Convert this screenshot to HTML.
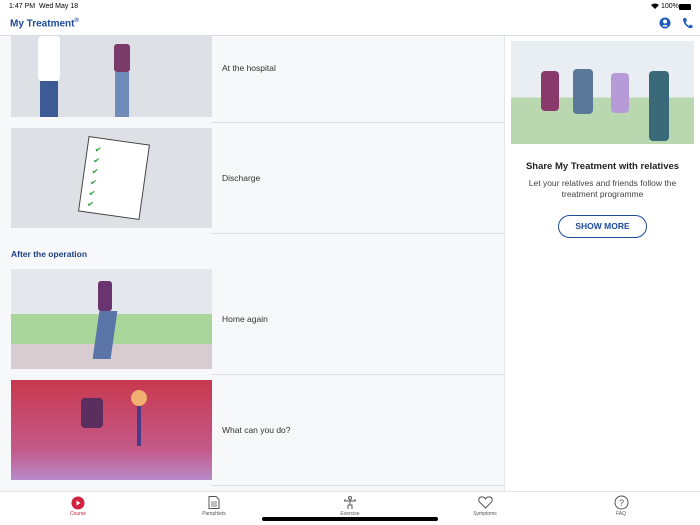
<!DOCTYPE html>
<html><head><meta charset="utf-8"><style>
*{margin:0;padding:0;box-sizing:border-box}
body{width:700px;height:525px;overflow:hidden;font-family:"Liberation Sans",sans-serif;background:#fff;position:relative}
.abs{position:absolute}
.sb{font-size:7px;color:#000;top:3px}
.list{left:0;top:36px;width:505px;height:455px;background:#f7f8fa;border-right:1px solid #e4e6ea;overflow:hidden}
.img{position:absolute;left:11px;width:201px;overflow:hidden}
.lbl{position:absolute;left:222px;font-size:8.5px;color:#333}
.div{position:absolute;left:211px;width:294px;height:1px;background:#dcdfe3}
.tab{position:absolute;top:511px;font-size:5px;color:#555;text-align:center;width:60px}
</style></head><body>
<div class="abs sb" style="left:9px">1:47 PM&nbsp;&nbsp;Wed May 18</div>
<div class="abs sb" style="left:661px">100%</div>
<svg class="abs" style="left:651px;top:3px" width="8" height="6" viewBox="0 0 8 6"><path d="M0 2Q4-1 8 2L4 6Z" fill="#000"/></svg>
<div class="abs" style="left:679px;top:4px;width:12px;height:6px;background:#000;border-radius:1px"></div>
<div class="abs" style="left:10px;top:18px;font-size:10px;font-weight:bold;color:#1e4a9c">My Treatment<sup style="font-size:6px">®</sup></div>
<svg class="abs" style="left:659px;top:17px" width="12" height="12" viewBox="0 0 12 12"><circle cx="6" cy="6" r="5.5" fill="#1e5bbd"/><circle cx="6" cy="4.5" r="2" fill="#fff"/><path d="M2.8 9.5Q6 6 9.2 9.5" fill="#fff"/></svg>
<svg class="abs" style="left:682px;top:17px" width="11" height="12" viewBox="0 0 11 12"><path d="M2 1L4 1 5 4 3.5 5Q5 8 7 9L8 7.5 10.5 8.5 10.5 10.5Q9 11.5 7 11 2 8 1 3Q1 1.5 2 1Z" fill="#1e5bbd"/></svg>
<div class="abs" style="left:0;top:35px;width:700px;height:1px;background:#d8dbe0"></div>
<div class="abs list">
 <div class="img" style="top:0;height:81px;background:#dde1e6">
  <div class="abs" style="left:27px;top:0;width:22px;height:45px;background:#fff;border-radius:4px"></div>
  <div class="abs" style="left:29px;top:45px;width:18px;height:36px;background:#3c5a94"></div>
  <div class="abs" style="left:103px;top:8px;width:16px;height:28px;background:#7a3a6a;border-radius:3px"></div>
  <div class="abs" style="left:104px;top:36px;width:14px;height:45px;background:#6f8cb8"></div>
 </div>
 <div class="lbl" style="top:27px">At the hospital</div>
 <div class="div" style="top:86px"></div>
 <div class="img" style="top:92px;height:100px;background:#dde1e6">
  <div class="abs" style="left:72px;top:12px;width:62px;height:76px;background:#fff;border:1px solid #444;transform:rotate(8deg)"></div>
  <div class="abs" style="left:80px;top:16px;color:#2aa040;font-size:8px;line-height:11px;transform:rotate(8deg)">✔<br>✔<br>✔<br>✔<br>✔<br>✔</div>
 </div>
 <div class="lbl" style="top:137px">Discharge</div>
 <div class="div" style="top:197px"></div>
 <div class="abs" style="left:11px;top:213px;font-size:8.5px;font-weight:bold;color:#1e3f80">After the operation</div>
 <div class="img" style="top:233px;height:100px;background:linear-gradient(#e4e7ec 0,#e4e7ec 45%,#a9d49a 45%,#a9d49a 75%,#d8ccd0 75%)">
  <div class="abs" style="left:87px;top:12px;width:14px;height:30px;background:#6a3470;border-radius:3px"></div>
  <div class="abs" style="left:85px;top:42px;width:18px;height:48px;background:#5a74a8;transform:skewX(-8deg)"></div>
 </div>
 <div class="lbl" style="top:278px">Home again</div>
 <div class="div" style="top:338px"></div>
 <div class="img" style="top:344px;height:100px;background:linear-gradient(#c8384e,#c45a8a 70%,#b78ac8)">
  <div class="abs" style="left:70px;top:18px;width:22px;height:30px;background:#5a2e5e;border-radius:4px"></div>
  <div class="abs" style="left:120px;top:10px;width:16px;height:16px;background:#f2b070;border-radius:50%"></div>
  <div class="abs" style="left:126px;top:26px;width:4px;height:40px;background:#4a3a8a"></div>
 </div>
 <div class="lbl" style="top:389px">What can you do?</div>
 <div class="div" style="top:449px"></div>
</div>
<div class="abs" style="left:511px;top:41px;width:183px;height:103px;background:linear-gradient(#e8eef2 0,#e8eef2 55%,#b9d8b0 55%)">
  <div class="abs" style="left:30px;top:30px;width:18px;height:40px;background:#8a3a6a;border-radius:4px"></div>
  <div class="abs" style="left:62px;top:28px;width:20px;height:45px;background:#5a7898;border-radius:4px"></div>
  <div class="abs" style="left:100px;top:32px;width:18px;height:40px;background:#b79ad8;border-radius:4px"></div>
  <div class="abs" style="left:138px;top:30px;width:20px;height:70px;background:#3a6a7a;border-radius:4px"></div>
</div>
<div class="abs" style="left:505px;top:161px;width:195px;text-align:center;font-size:9.5px;font-weight:bold;color:#222">Share My Treatment with relatives</div>
<div class="abs" style="left:515px;top:178px;width:175px;text-align:center;font-size:8.5px;line-height:11px;color:#444">Let your relatives and friends follow the treatment programme</div>
<div class="abs" style="left:558px;top:215px;width:89px;height:23px;border:1px solid #1e4a9c;border-radius:12px;text-align:center;line-height:21px;font-size:8.5px;font-weight:bold;color:#1e4a9c">SHOW MORE</div>
<div class="abs" style="left:0;top:491px;width:700px;height:1px;background:#e2e4e8"></div>
<svg class="abs" style="left:71px;top:496px" width="14" height="14"><circle cx="7" cy="7" r="6.5" fill="#d0223f"/><path d="M5.5 4.5L9.5 7 5.5 9.5Z" fill="#fff"/></svg>
<div class="tab" style="left:48px;color:#d0223f">Course</div>
<svg class="abs" style="left:208px;top:496px" width="12" height="13"><path d="M1 .5H8L11 3.5V12.5H1Z" fill="none" stroke="#555"/><path d="M3 6H9M3 8H9M3 10H9" stroke="#555" stroke-width=".7"/></svg>
<div class="tab" style="left:184px">Pamphlets</div>
<svg class="abs" style="left:343px;top:496px" width="14" height="14"><circle cx="7" cy="2" r="1.5" fill="none" stroke="#555"/><path d="M1 5H13M7 4V9M5 9H9V13M5 9V13M2 3V5M12 3V5" fill="none" stroke="#555"/></svg>
<div class="tab" style="left:320px">Exercise</div>
<svg class="abs" style="left:478px;top:496px" width="15" height="13"><path d="M7.5 12L1.5 6Q-.5 2 3 1 6 .5 7.5 3 9 .5 12 1 15.5 2 13.5 6Z" fill="none" stroke="#555"/></svg>
<div class="tab" style="left:455px">Symptoms</div>
<svg class="abs" style="left:614px;top:495px" width="15" height="15"><circle cx="7.5" cy="7.5" r="6.5" fill="none" stroke="#555"/><text x="7.5" y="11" font-size="9" text-anchor="middle" fill="#555" font-family="Liberation Sans">?</text></svg>
<div class="tab" style="left:591px">FAQ</div>
<div class="abs" style="left:262px;top:517px;width:176px;height:4px;background:#000;border-radius:2px"></div>
</body></html>
